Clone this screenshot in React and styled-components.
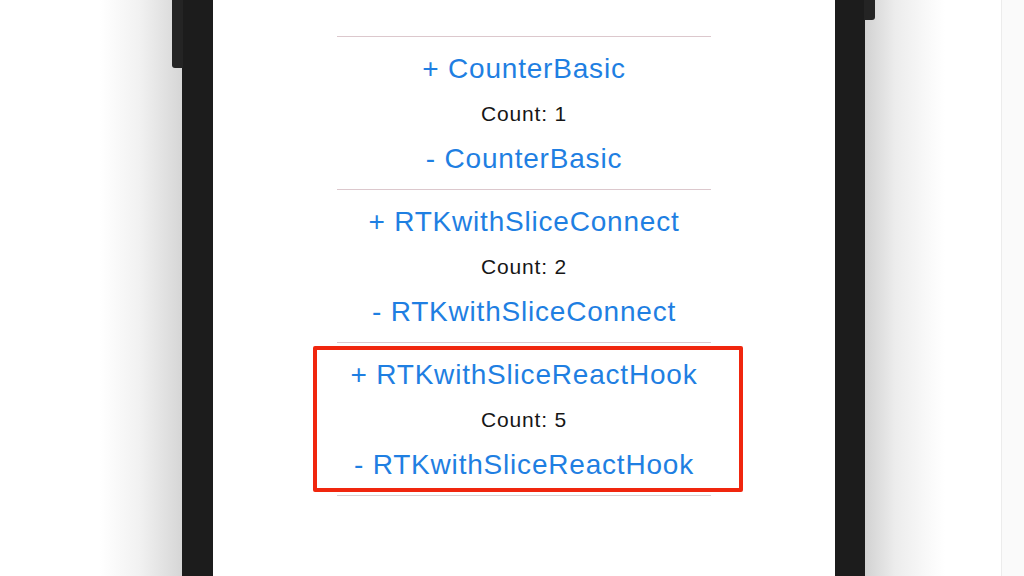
import React from 'react';
import styled, { createGlobalStyle } from 'styled-components';

const GlobalStyle = createGlobalStyle`
  html, body { margin: 0; padding: 0; background: #fff; }
  body { font-family: "Liberation Sans", Arial, sans-serif; }
`;

const Stage = styled.div`
  display: flex;
  height: 576px;
  overflow: hidden;
`;

const LeftShade = styled.div`
  width: 182px;
  flex-shrink: 0;
  background: linear-gradient(to right, #fff 0px, #fff 100px, #f1f1f1 140px, #d6d6d6 182px);
`;

const RightShade = styled.div`
  width: 136px;
  flex-shrink: 0;
  background: linear-gradient(to right, #d2d2d2 0px, #ececec 30px, #f8f8f8 60px, #fff 80px);
  border-right: 1px solid #ececec;
`;

const Outside = styled.div`
  flex: 1;
  background: #fafafa;
`;

const Phone = styled.div`
  position: relative;
  width: 622px;
  flex-shrink: 0;
  background: #1c1c1c;
  padding: 0 30px 0 31px;
`;

const SideButton = styled.div`
  position: absolute;
  top: 0;
  width: 11px;
  height: ${p => p.h}px;
  background: #242424;
  ${p => (p.side === 'left' ? 'left: -10px; border-radius: 0 0 0 3px;' : 'right: -10px; border-radius: 0 0 3px 0;')}
`;

const Screen = styled.div`
  height: 100%;
  background: #fff;
  display: flex;
  flex-direction: column;
  align-items: center;
  padding-top: 36px;
  box-sizing: border-box;
`;

const List = styled.div`
  width: 374px;
  border-bottom: 1px solid #d6d3d4;
`;

const Section = styled.div`
  position: relative;
  border-top: 1px solid #dcc8cd;
  padding: 9px 0 8px;
  display: flex;
  flex-direction: column;
  align-items: center;
`;

const ActionButton = styled.div`
  height: 45px;
  line-height: 45px;
  font-size: 28px;
  letter-spacing: 0.8px;
  color: #1f7fe2;
  white-space: nowrap;
  cursor: pointer;
`;

const CountText = styled.div`
  height: 45px;
  line-height: 45px;
  font-size: 21px;
  letter-spacing: 0.8px;
  color: #161616;
`;

const Highlight = styled.div`
  position: absolute;
  top: 3px;
  bottom: 3px;
  left: -24px;
  right: -32px;
  border: 4px solid #f0260e;
  border-radius: 2px;
  pointer-events: none;
`;

const counters = [
  { name: 'CounterBasic', count: 1 },
  { name: 'RTKwithSliceConnect', count: 2 },
  { name: 'RTKwithSliceReactHook', count: 5, marked: true },
];

function CounterSection({ name, count, marked }) {
  return (
    <Section>
      <ActionButton>+ {name}</ActionButton>
      <CountText>Count: {count}</CountText>
      <ActionButton>- {name}</ActionButton>
      {marked && <Highlight />}
    </Section>
  );
}

export default function App() {
  return (
    <>
      <GlobalStyle />
      <Stage>
        <LeftShade />
        <Phone>
          <SideButton side="left" h={68} />
          <SideButton side="right" h={20} />
          <Screen>
            <List>
              {counters.map(c => (
                <CounterSection key={c.name} {...c} />
              ))}
            </List>
          </Screen>
        </Phone>
        <RightShade />
        <Outside />
      </Stage>
    </>
  );
}
